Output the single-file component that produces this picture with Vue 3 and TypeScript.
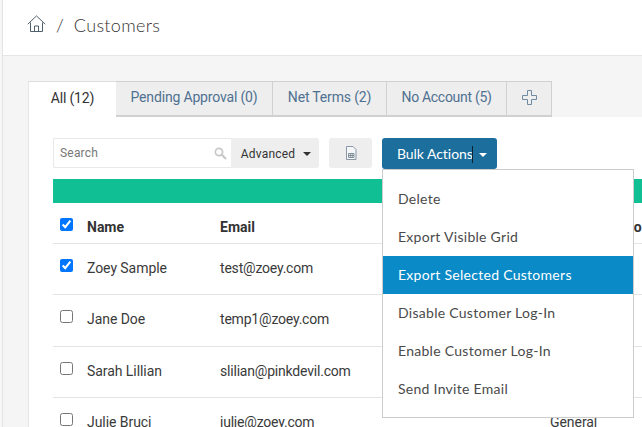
<script setup lang="ts">
interface Customer { name: string; email: string; group: string; checked: boolean; cls: string }
const tabs = ['Pending Approval (0)', 'Net Terms (2)', 'No Account (5)']
const customers: Customer[] = [
  { name: 'Zoey Sample', email: 'test@zoey.com', group: 'General', checked: true, cls: 'r1' },
  { name: 'Jane Doe', email: 'temp1@zoey.com', group: 'General', checked: false, cls: 'r2' },
  { name: 'Sarah Lillian', email: 'slilian@pinkdevil.com', group: 'General', checked: false, cls: 'r3' },
  { name: 'Julie Bruci', email: 'julie@zoey.com', group: 'General', checked: false, cls: 'r4' }
]
const actions = ['Delete', 'Export Visible Grid', 'Export Selected Customers', 'Disable Customer Log-In', 'Enable Customer Log-In', 'Send Invite Email']
</script>

<template>
  <div class="root">
    <div class="strip"></div>
    <div class="main">
      <header class="crumb">
        <svg class="home" width="19" height="18" viewBox="0 0 19 18" fill="none" stroke="#4f5f6b" stroke-width="1">
          <path d="M0.8 9.2 L9.5 0.9 L18.2 9.2" />
          <path d="M3.5 7.5 V16.5 H15.5 V7.5" />
          <path d="M7.5 16.5 V11 H11.5 V16.5" />
        </svg>
        <span class="sep">/</span>
        <span class="title">Customers</span>
      </header>
      <section class="content">
        <nav class="tabs">
          <div class="tab active">All (12)</div>
          <div v-for="t in tabs" :key="t" class="tab">{{ t }}</div>
          <div class="tab plus">
            <svg width="15" height="15" viewBox="0 0 15 15" fill="none" stroke="#6f8ba3" stroke-width="1">
              <path d="M5.5 0.5 H9.5 V5.5 H14.5 V9.5 H9.5 V14.5 H5.5 V9.5 H0.5 V5.5 H5.5 Z" />
            </svg>
          </div>
        </nav>
        <div class="panel">
          <div class="toolbar">
            <div class="search">
              <span class="ph">Search</span>
              <svg width="13" height="13" viewBox="0 0 13 13" fill="none" stroke="#c8c8c8">
                <circle cx="5" cy="5" r="3.6" stroke-width="1.7" />
                <path d="M7.8 7.8 L12 12" stroke-width="2.3" />
              </svg>
            </div>
            <button class="adv">Advanced<i class="caret dark"></i></button>
            <button class="file">
              <svg width="12" height="14" viewBox="0 0 12 14" fill="#f4f6f8" stroke="#8a97a5" stroke-width="1">
                <path d="M1.5 0.5 H8 L11 3.5 V13.5 H1.5 Z" />
                <path d="M3.5 7.5 H9 V11.5 H3.5 Z M3.5 9.5 H9 M5.3 7.5 V11.5 M7.2 7.5 V11.5" stroke="#6f7d8c" stroke-width="0.8" />
              </svg>
            </button>
            <div class="bulkwrap">
              <button class="bulk">Bulk Actions<span class="cursor"></span><i class="caret light"></i></button>
              <ul class="menu">
                <li v-for="a in actions" :key="a" :class="{ hot: a === 'Export Selected Customers' }">{{ a }}</li>
              </ul>
            </div>
          </div>
          <div class="greenbar"></div>
          <div class="row head">
            <span class="chk"><input type="checkbox" checked /></span>
            <span>Name</span>
            <span>Email</span>
            <span class="grouphead">Customer Group</span>
          </div>
          <div v-for="c in customers" :key="c.email" class="row" :class="c.cls">
            <span class="chk"><input type="checkbox" :checked="c.checked" /></span>
            <span>{{ c.name }}</span>
            <span class="email">{{ c.email }}</span>
            <span>{{ c.group }}</span>
          </div>
        </div>
      </section>
    </div>
  </div>
</template>

<style>
html, body { margin: 0; background: #fff; }
</style>

<style scoped>
* { box-sizing: border-box; }
.root {
  width: 642px; height: 427px; overflow: hidden; display: flex;
  font-family: Roboto, "Liberation Sans", sans-serif; font-size: 14px; color: #333;
}
.strip { width: 3px; flex: none; background: #f7f7f7; border-right: 1px solid #e3e3e3; }
.main { flex: 1; min-width: 0; display: flex; flex-direction: column; }
.crumb {
  height: 56px; flex: none; display: flex; align-items: center; padding: 0 0 6px 24px;
  background: #fff; border-bottom: 1px solid #e6e6e6;
  font-family: Lato, sans-serif;
}
.home { display: block; margin-top: -1px; }
.sep { margin-left: 10px; font-size: 18px; font-weight: 300; color: #333; }
.title { margin-left: 10px; font-size: 18px; letter-spacing: 0.33px; font-weight: 300; color: #333; }
.content { flex: 1; background: #f5f5f5; padding: 25px 0 0 25px; }
.tabs { display: flex; height: 36px; }
.tab {
  padding: 0 0 3px; display: flex; align-items: center; justify-content: center;
  background: #eee; color: #4e7191; border: 1px solid #d0d0d0; border-left: 0; border-bottom-width: 2px;
  white-space: nowrap; letter-spacing: -0.17px;
}
.tab:nth-child(2) { width: 157px; }
.tab:nth-child(3) { width: 114px; }
.tab:nth-child(4) { width: 120px; letter-spacing: -0.3px; }
.tab.active {
  width: 88px; background: #fff; color: #333;
  border: 0; border-top: 1px solid #ddd; border-left: 1px solid #e6e6e6;
}
.tab.plus { width: 45px; }
.panel { background: #fff; padding: 21px 0 0 24px; height: 320px; border-left: 1px solid #e6e6e6; }
.toolbar { display: flex; height: 31px; }
.search {
  width: 178px; height: 30px; display: flex; align-items: center; justify-content: space-between;
  padding: 0 4px 0 6px; border: 1px solid #e8e8e8; border-right: 0; border-radius: 2px 0 0 2px;
  font-size: 12px; letter-spacing: 0.2px; color: #777;
}
.adv {
  width: 88px; height: 30px; padding: 1px 0 0 2px; border: 0; border-radius: 0 3px 3px 0; background: #eee;
  font: 12px Roboto, sans-serif; letter-spacing: 0.2px; color: #333;
}
.file {
  width: 43px; height: 30px; margin-left: 10px; padding: 3px 0 0; border: 0; border-radius: 3px; background: #eee;
}
.bulkwrap { margin-left: 10px; position: relative; }
.bulk {
  width: 115px; height: 31px; padding: 0 0 0 15px; text-align: left; border: 0; border-radius: 3px; background: #1c6e9c; color: #fff;
  font: 14px Lato, sans-serif; letter-spacing: -0.05px; white-space: nowrap;
}
.cursor { display: inline-block; width: 0; height: 17px; margin: 0 0 0 -1px; border-left: 1px solid #123; vertical-align: -4px; }
.caret { display: inline-block; margin-left: 8px; vertical-align: 2px; border: 4px solid transparent; border-bottom: 0; }
.caret.dark { border-top-color: #333; }
.caret.light { margin-left: 6px; border-top-color: #fff; }
.menu {
  position: absolute; left: 0; top: 31px; z-index: 2; width: 252px; height: 249px; margin: 0; padding: 10px 0 0;
  list-style: none; background: #fff; border: 1px solid #ccc;
  font-family: Lato, sans-serif; color: #4a4a4a; letter-spacing: 0.28px;
}
.menu li { height: 38px; line-height: 38px; padding-left: 15px; white-space: nowrap; }
.menu li.hot { background: #0a8ac6; color: #fff; }
.greenbar { height: 24px; margin-top: 10px; background: #10bf94; }
.row {
  display: grid; grid-template-columns: 34px 133px 330px 1fr; height: 51px; padding-top: 15px;
  border-bottom: 1px solid #e4e4e4; white-space: nowrap; color: #3a3a3a; line-height: 18px; letter-spacing: -0.06px;
}
.row.r2 { height: 52px; }
.row.head { height: 41px; font-weight: 700; color: #333; letter-spacing: 0; }
.email { letter-spacing: -0.2px; }
.grouphead { letter-spacing: 0.4px; }
.chk { padding-left: 7px; }
.chk input { display: block; width: 13px; height: 13px; margin: 0; }
</style>
